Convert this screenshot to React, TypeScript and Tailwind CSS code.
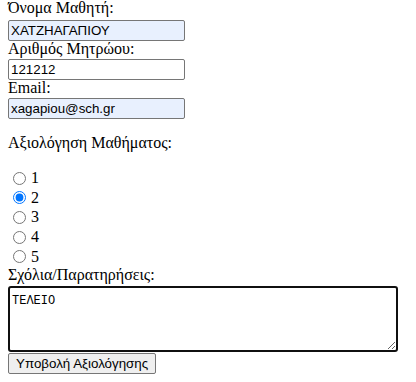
import { useState } from 'react'

const ratings = ['1', '2', '3', '4', '5']

export default function App() {
  const [rating, setRating] = useState('2')

  return (
    <form
      className="flex flex-col items-start pl-[8px] font-['Liberation_Serif',serif] text-[16px] text-black bg-white min-h-[382px]"
      onSubmit={(e) => e.preventDefault()}
    >
      <label className="h-[20px] leading-[16px]">Όνομα Μαθητή:</label>
      <input
        type="text"
        defaultValue="ΧΑΤΖΗΑΓΑΠΙΟΥ"
        className="w-[177px] h-[21px] border border-[#767676] rounded-[2px] bg-[#e8f0fe] pl-[2px] font-['Liberation_Sans',sans-serif] text-[13.33px] outline-none"
      />
      <label className="h-[18px] leading-[16px]">Αριθμός Μητρώου:</label>
      <input
        type="text"
        defaultValue="121212"
        className="w-[177px] h-[21px] border border-[#767676] rounded-[2px] bg-white pl-[2px] font-['Liberation_Sans',sans-serif] text-[13.33px] outline-none"
      />
      <label className="h-[18px] leading-[16px]">Email:</label>
      <input
        type="email"
        defaultValue="xagapiou@sch.gr"
        className="w-[177px] h-[21px] border border-[#767676] rounded-[2px] bg-[#e8f0fe] pl-[2px] font-['Liberation_Sans',sans-serif] text-[13.33px] outline-none"
      />

      <p className="mt-[16px] h-[18px] leading-[16px]">Αξιολόγηση Μαθήματος:</p>

      {/* rating radios */}
      <div className="mt-[15.5px] flex flex-col">
        {ratings.map((r) => (
          <label key={r} className="flex items-start h-[19.7px]">
            <input
              type="radio"
              name="rating"
              value={r}
              checked={rating === r}
              onChange={() => setRating(r)}
              className="shrink-0 w-[13px] h-[13px] mt-[3px] mr-[5px] ml-[5px] mb-0"
            />
            <span className="mt-[1.5px] leading-[16px]">{r}</span>
          </label>
        ))}
      </div>

      <label className="h-[19px] leading-[16px]">Σχόλια/Παρατηρήσεις:</label>
      <textarea
        defaultValue="ΤΕΛΕΙΟ"
        className="w-[390px] h-[66px] border-2 border-[#101010] rounded-[3px] px-[2px] pt-[4px] font-['Liberation_Mono',monospace] text-[12px] outline-none"
      />
      <button
        type="submit"
        className="mt-[1px] h-[21px] px-[7px] border border-[#767676] rounded-[2px] bg-[#efefef] font-['Liberation_Sans',sans-serif] text-[13.33px] text-black"
      >
        Υποβολή Αξιολόγησης
      </button>
    </form>
  )
}
